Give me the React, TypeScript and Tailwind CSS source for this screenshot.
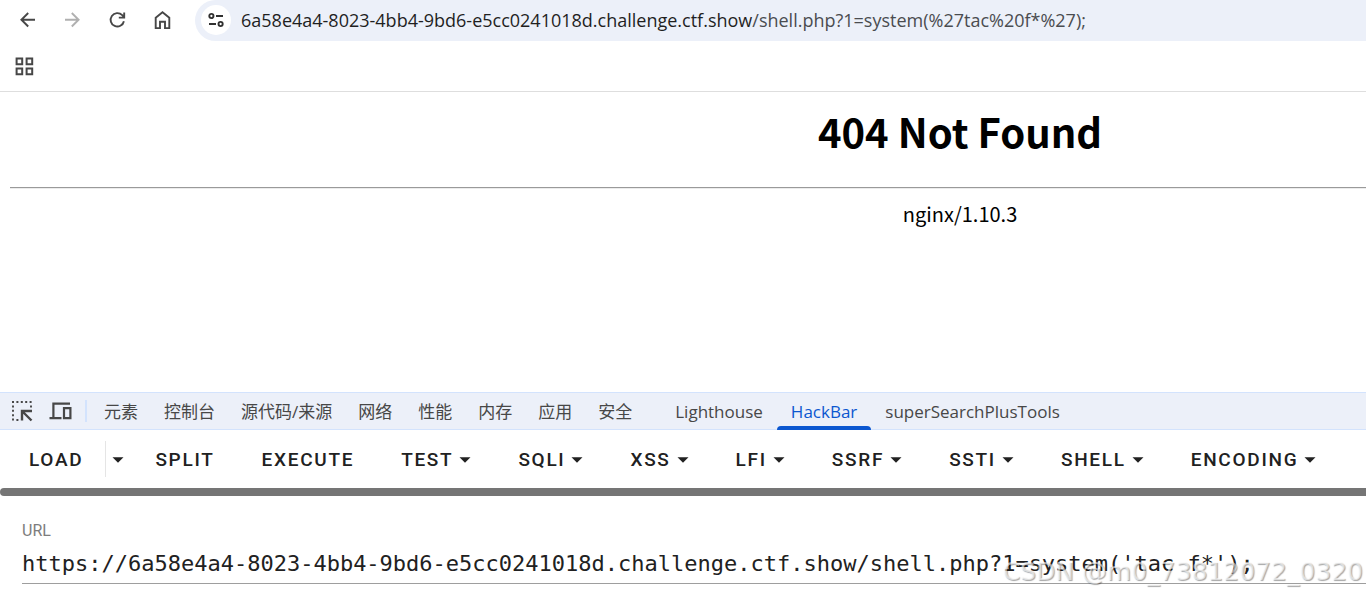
import type { ReactNode } from "react";

const tabs = ["元素", "控制台", "源代码/来源", "网络", "性能", "内存", "应用", "安全"];
const extensionTabs = ["Lighthouse", "HackBar", "superSearchPlusTools"];
const menus = ["Test", "SQLi", "XSS", "LFI", "SSRF", "SSTI", "Shell", "Encoding"];

function Icon({ children }: { children: ReactNode }) {
  return (
    <svg viewBox="0 0 24 24" className="size-6 shrink-0" fill="none" stroke="currentColor" strokeWidth="1.9" aria-hidden="true">
      {children}
    </svg>
  );
}

function NavButton({ label, disabled, children }: { label: string; disabled?: boolean; children: ReactNode }) {
  return (
    <button type="button" aria-label={label} disabled={disabled} className="text-[#474747] disabled:text-[#b0b0b0]">
      <Icon>{children}</Icon>
    </button>
  );
}

function Caret() {
  return (
    <svg viewBox="0 0 12 6" className="h-[6px] w-3 shrink-0" fill="currentColor" aria-hidden="true">
      <path d="M.5 .3h11L6 5.8z" />
    </svg>
  );
}

function BrowserBar() {
  return (
    <header className="border-b border-[#dedede] bg-white">
      <div className="flex h-[41px] items-start">
        <nav className="flex h-10 items-center gap-[21px] pr-[21px] pl-[15px]">
          <NavButton label="Back">
            <path d="M20 11.7H6.5M13.2 5l-6.8 6.7 6.8 6.8" />
          </NavButton>
          <NavButton label="Forward" disabled>
            <path d="M5 11.7h13.5M11.8 5l6.8 6.7-6.8 6.8" />
          </NavButton>
          <NavButton label="Reload">
            <path d="M18.9 13.2A6.7 6.7 0 1 1 17.2 7.2l1.4 1.5M19.2 4.4v5.2h-5.4" />
          </NavButton>
          <NavButton label="Home">
            <path d="M5.7 9.7 12.5 4.3l6.8 5.4v10.4H15v-6.4h-5v6.4H5.7z" />
          </NavButton>
        </nav>
        <div className="flex h-[41px] min-w-0 flex-1 items-start overflow-hidden rounded-l-full bg-[#ecf0f9] pl-[6px]">
          <button type="button" aria-label="Site information" className="mt-[5px] grid size-[30px] shrink-0 place-items-center rounded-full bg-white text-[#303030]">
            <svg viewBox="0 0 18 16" className="h-4 w-[18px]" fill="none" stroke="currentColor" strokeWidth="1.9" aria-hidden="true">
              <circle cx="4.4" cy="4" r="2.1" />
              <path d="M9 4h7M2 12h7" />
              <circle cx="13.6" cy="12" r="2.1" />
            </svg>
          </button>
          <div
            role="textbox"
            aria-label="Address"
            contentEditable
            suppressContentEditableWarning
            spellCheck={false}
            className="h-10 pl-[10px] font-['Open_Sans',sans-serif] text-[18px] leading-10 whitespace-nowrap text-[#4a4c50] outline-none"
          >
            <span className="text-[#1f1f1f]">6a58e4a4-8023-4bb4-9bd6-e5cc0241018d.challenge.ctf.show</span>
            /shell.php?1=system(%27tac%20f*%27);
          </div>
        </div>
      </div>
      <div className="flex h-[50px] items-center pl-[15px]">
        <button type="button" aria-label="Apps" className="text-[#474747]">
          <svg viewBox="0 0 19 19" className="size-[19px]" fill="none" stroke="currentColor" strokeWidth="2" aria-hidden="true">
            <path d="M1.6 1.6h5.6v5.6H1.6zM11.6 1.6h5.6v5.6h-5.6zM1.6 11.6h5.6v5.6H1.6zM11.6 11.6h5.6v5.6h-5.6z" />
          </svg>
        </button>
      </div>
    </header>
  );
}

function ErrorPage() {
  return (
    <main className="h-[300px] overflow-hidden pl-[10px] font-['Noto_Sans_CJK_SC',sans-serif] text-black">
      <div className="w-[1900px] text-center">
        <h1 className="pt-[9px] pb-[26px] text-[40px] leading-[60px] font-bold">404 Not Found</h1>
        <hr className="h-[2px] border-t border-b border-t-[#9a9a9a] border-b-[#ececec]" />
        <p className="pt-[10px] text-[20px] leading-[30px]">nginx/1.10.3</p>
      </div>
    </main>
  );
}

function Tab({ name, padding }: { name: string; padding: string }) {
  const active = name === "HackBar";
  return (
    <button
      type="button"
      role="tab"
      aria-selected={active}
      className={`relative h-full pt-[2px] whitespace-nowrap text-[#474747] aria-selected:text-[#0b57d0] ${padding}`}
    >
      {name}
      {active && <span className="absolute inset-x-0 -bottom-px h-1 rounded-t-full bg-[#0b57d0]" />}
    </button>
  );
}

function DevToolsTabs() {
  return (
    <div className="flex h-[38px] items-center border-y border-[#d3e3fd] bg-[#ecf0f9] pl-[10px] text-[#474747]">
      <button type="button" aria-label="Inspect element">
        <Icon>
          <path d="M2 3h20" strokeDasharray="2 2.4" />
          <path d="M3 6.4V22" strokeDasharray="2 2.4" />
          <path d="M21 6.4v2M6.4 21h2" />
          <path d="M12 21.5V12h10M12.5 12.5l9 9" strokeWidth="2.4" />
        </Icon>
      </button>
      <button type="button" aria-label="Device toolbar" className="ml-[14px]">
        <Icon>
          <path d="M22 4.6H5.4V19M1.5 19.2h12" strokeWidth="2.2" />
          <path d="M16 9.2h6.4v10H16z" strokeWidth="2.2" />
        </Icon>
      </button>
      <span className="mr-1 ml-[13px] h-[22px] w-[2px] bg-[#d3e3fd]" />
      <div role="tablist" className="flex h-full font-['Open_Sans','Noto_Sans_CJK_SC',sans-serif] text-[17px]">
        <div className="flex">
          {tabs.map((name) => <Tab key={name} name={name} padding="px-[13px]" />)}
        </div>
        <div className="ml-4 flex">
          {extensionTabs.map((name) => <Tab key={name} name={name} padding="px-[14px]" />)}
        </div>
      </div>
    </div>
  );
}

function HackBar() {
  return (
    <section className="font-[Roboto,sans-serif] text-[#212121]">
      <div className="flex h-[58px] items-center gap-[3px] overflow-hidden pl-[7px] text-[19px] font-medium tracking-[0.09em]">
        <div className="flex items-center">
          <button type="button" className="h-9 px-[22px] pt-[2px] uppercase">Load</button>
          <button type="button" aria-label="Load options" className="grid h-9 w-[25px] place-items-center border-l border-[#e5e5e5] pt-[2px]">
            <Caret />
          </button>
        </div>
        <button type="button" className="h-9 px-[22px] pt-[2px] uppercase">Split</button>
        <button type="button" className="h-9 px-[22px] pt-[2px] uppercase">Execute</button>
        {menus.map((name) => (
          <button key={name} type="button" className="flex h-9 items-center gap-[6px] px-[22px] pt-[2px] uppercase">
            {name}
            <Caret />
          </button>
        ))}
      </div>
      <div className="h-2 rounded-l-full bg-[#757575]" />
      <div className="pt-[23px] pl-[22px]">
        <label htmlFor="url" className="block text-[16px] leading-6 text-[#7d7d7d]">URL</label>
        <input
          id="url"
          type="text"
          spellCheck={false}
          defaultValue="https://6a58e4a4-8023-4bb4-9bd6-e5cc0241018d.challenge.ctf.show/shell.php?1=system('tac f*');"
          className="block h-[41px] w-full border-b border-[#9e9e9e] pt-px font-['DejaVu_Sans_Mono',monospace] text-[22px] outline-none"
        />
      </div>
    </section>
  );
}

export default function App() {
  return (
    <div className="relative overflow-hidden bg-white pb-[10px]">
      <BrowserBar />
      <ErrorPage />
      <DevToolsTabs />
      <HackBar />
      <div className="pointer-events-none absolute right-[3px] bottom-[6px] font-['DejaVu_Sans',sans-serif] text-[25px] leading-8 text-white/60 [text-shadow:1px_1px_1px_rgb(0_0_0/0.35)]">
        CSDN @m0_73812072_0320
      </div>
    </div>
  );
}
